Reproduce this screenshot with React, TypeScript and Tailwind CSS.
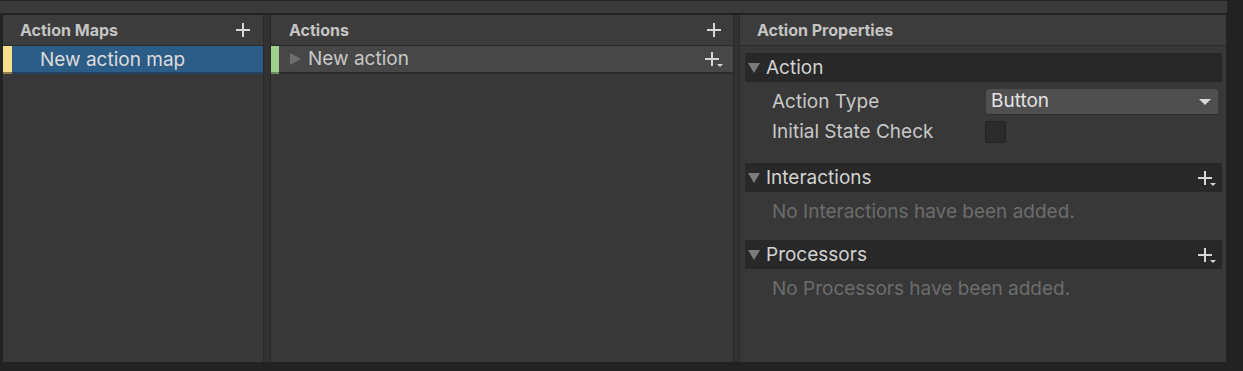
import React from "react";

function Plus({ className = "" }: { className?: string }) {
  return (
    <svg width="16" height="16" viewBox="0 0 16 16" className={className}>
      <rect x="7" y="1" width="2" height="14" fill="#d6d6d6" />
      <rect x="1" y="7" width="14" height="2" fill="#d6d6d6" />
    </svg>
  );
}

function PlusMenu({ className = "" }: { className?: string }) {
  return (
    <svg width="20" height="18" viewBox="0 0 20 18" className={className}>
      <rect x="7" y="1" width="2" height="14" fill="#d6d6d6" />
      <rect x="1" y="7" width="14" height="2" fill="#d6d6d6" />
      <polygon points="13,13 19,13 16,16" fill="#d6d6d6" />
    </svg>
  );
}

function Foldout({ title, menu }: { title: string; menu?: boolean }) {
  return (
    <div className="flex items-center h-[29px] ml-[5px] mr-[4px] bg-[#282828]">
      <svg width="21" height="12" viewBox="0 0 21 12" className="shrink-0">
        <polygon points="3,1 15,1 9,11" fill="#7b7b7b" />
      </svg>
      <span className="text-[19px] leading-none text-[#d2d2d2]">{title}</span>
      {menu && <PlusMenu className="ml-auto mr-[5px] mt-[2px]" />}
    </div>
  );
}

export default function App() {
  return (
    <div className="w-[1243px] h-[371px] bg-[#222222] flex flex-col font-['Inter',sans-serif] overflow-hidden">
      {/* top toolbar strip */}
      <div className="mt-px h-[12px] mr-[16px] bg-[#3a3a3a]" />
      <div className="h-[2px]" />

      <div className="flex h-[347px] pl-[3px] w-[1226px]">
        {/* Action Maps */}
        <div className="w-[260px] flex flex-col bg-[#383838]">
          <div className="h-[31px] flex items-center justify-between pl-[17px] pr-[12px] bg-[#3c3c3c] border-b border-[#2b2b2b]">
            <span className="text-[16px] font-bold text-[#c4c4c4]">Action Maps</span>
            <Plus />
          </div>
          <div className="flex h-[26px] bg-[#2c5d87]">
            <div className="w-[9px] bg-[#f7de8a]" />
            <span className="pl-[28px] text-[19px] leading-[28px] text-[#dcdcdc]">New action map</span>
          </div>
          <div className="flex h-[2px]">
            <div className="w-[9px] bg-[#8c7c4c]" />
            <div className="flex-1 bg-[#23425f]" />
          </div>
        </div>

        <div className="w-[8px] bg-[#323232] border-x border-[#292929]" />

        {/* Actions */}
        <div className="w-[462px] flex flex-col bg-[#383838]">
          <div className="h-[31px] flex items-center justify-between pl-[18px] pr-[11px] bg-[#3c3c3c] border-b border-[#2b2b2b]">
            <span className="text-[16px] font-bold text-[#c4c4c4]">Actions</span>
            <Plus />
          </div>
          <div className="flex items-center h-[26px] bg-[#474747]">
            <div className="w-[8px] h-full bg-[#9fd18d]" />
            <svg width="29" height="14" viewBox="0 0 29 14" className="shrink-0">
              <polygon points="11,1 22,7 11,13" fill="#6e6e6e" />
            </svg>
            <span className="text-[19px] leading-[28px] text-[#c8c8c8]">New action</span>
            <PlusMenu className="ml-auto mr-[9px] mt-[2px]" />
          </div>
          <div className="flex h-[2px]">
            <div className="w-[8px] bg-[#6c8a60]" />
            <div className="flex-1 bg-[#2d2d2d]" />
          </div>
        </div>

        <div className="w-[7px] bg-[#323232] border-x border-[#292929]" />

        {/* Action Properties */}
        <div className="flex-1 flex flex-col bg-[#383838]">
          <div className="h-[31px] flex items-center pl-[17px] bg-[#3c3c3c] border-b border-[#2b2b2b]">
            <span className="text-[16px] font-bold text-[#c4c4c4]">Action Properties</span>
          </div>

          <div className="mt-[7px]">
            <Foldout title="Action" />
          </div>
          <div className="mt-[7px] flex items-center h-[26px] pl-[32px] pr-[8px]">
            <span className="w-[214px] text-[19px] text-[#c8c8c8]">Action Type</span>
            <div className="flex-1 h-[26px] flex items-center justify-between px-[5px] bg-[#4f4f4f] rounded-[3px] border-b border-[#2e2e2e]">
              <span className="text-[19px] text-[#e2e2e2]">Button</span>
              <svg width="12" height="8" viewBox="0 0 12 8" className="mr-[2px]">
                <polygon points="0,1 12,1 6,7" fill="#d8d8d8" />
              </svg>
            </div>
          </div>
          <div className="mt-[6px] flex items-center h-[22px] pl-[32px]">
            <span className="w-[213px] text-[19px] text-[#c8c8c8]">Initial State Check</span>
            <div className="w-[21px] h-[22px] bg-[#2b2b2b] border border-[#222222] rounded-[3px]" />
          </div>

          <div className="mt-[20px]">
            <Foldout title="Interactions" menu />
          </div>
          <div className="h-[40px] flex items-center pl-[32px] text-[19px] text-[#6c6c6c]">
            No Interactions have been added.
          </div>

          <div className="mt-[8px]">
            <Foldout title="Processors" menu />
          </div>
          <div className="h-[41px] flex items-center pl-[32px] text-[19px] text-[#6c6c6c]">
            No Processors have been added.
          </div>
        </div>
      </div>
    </div>
  );
}
